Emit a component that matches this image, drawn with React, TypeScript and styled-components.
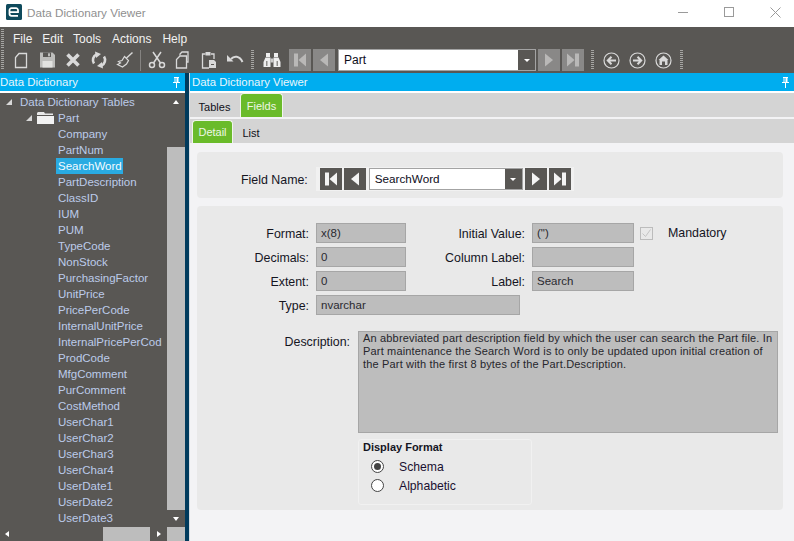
import React from 'react';
import styled, { createGlobalStyle } from 'styled-components';

const Global = createGlobalStyle`
  html, body { margin: 0; padding: 0; background: #fff; overflow: hidden; }
  body { font-family: 'Liberation Sans', Arial, sans-serif; font-size: 12px; }
  * { box-sizing: border-box; }
`;

const Window = styled.div`
  width: 794px;
  height: 541px;
  display: flex;
  flex-direction: column;
  overflow: hidden;
`;

const TitleBar = styled.div`
  height: 27px;
  flex: none;
  display: flex;
  align-items: center;
  padding: 0 0 3px 6px;
  background: #fff;
  color: #8f8f8f;
`;
const TitleText = styled.span`
  margin-left: 5px;
  font-size: 11.7px;
`;
const WindowButtons = styled.div`
  margin-left: auto;
  margin-right: -4px;
  display: flex;
  align-items: center;
`;
const WindowButton = styled.div`
  width: 46px;
  height: 24px;
  display: flex;
  align-items: center;
  justify-content: center;
`;

const Chrome = styled.div`
  flex: none;
  height: 46px;
  background: #595754;
  display: flex;
  flex-direction: column;
`;
const MenuBar = styled.div`
  height: 22px;
  display: flex;
  align-items: center;
  padding: 1px 0 0 1px;
`;
const Grip = styled.div`
  width: 3px;
  height: ${p => p.$h || 19}px;
  flex: none;
  margin-left: ${p => p.$ml || 0}px;
  background: repeating-linear-gradient(to bottom, #a5a5a3 0 1px, #595754 1px 2px);
`;
const MenuItem = styled.span`
  margin-left: ${p => p.$ml}px;
  color: #f2f2f2;
  font-size: 12px;
`;
const ToolBar = styled.div`
  height: 24px;
  display: flex;
  align-items: center;
  padding: 0 0 2px 1px;
`;
const ToolIcon = styled.div`
  width: 26px;
  height: 22px;
  flex: none;
  margin-left: ${p => p.$ml || 0}px;
  display: flex;
  align-items: center;
  justify-content: center;
`;
const Sep = styled.div`
  width: 1px;
  height: 21px;
  background: #858381;
  flex: none;
  margin-left: ${p => p.$ml || 0}px;
`;
const NavBtn = styled.div`
  width: 22px;
  height: 22px;
  flex: none;
  margin-left: ${p => p.$ml || 0}px;
  background: ${p => (p.$dark ? '#595754' : '#898887')};
  display: flex;
  align-items: center;
  justify-content: center;
`;
const Combo = styled.div`
  width: ${p => p.$w}px;
  height: 22px;
  flex: none;
  margin-left: ${p => p.$ml || 0}px;
  display: flex;
  background: #fff;
  border: 1px solid #a3a3a3;
  align-items: center;
  padding-left: 5px;
  color: #0d0d1a;
  font-size: ${p => p.$fs || 12}px;
`;
const ComboText = styled.span`
  position: relative;
  top: ${p => p.$top || 0}px;
`;
const ComboArrow = styled.div`
  margin-left: auto;
  align-self: stretch;
  width: 17px;
  background: #595754;
  display: flex;
  align-items: center;
  justify-content: center;
  &::after {
    content: '';
    border-left: 3px solid transparent;
    border-right: 3px solid transparent;
    border-top: 3px solid #fff;
  }
`;

const Body = styled.div`
  flex: 1;
  display: flex;
  min-height: 0;
`;
const LeftPanel = styled.div`
  width: 185px;
  flex: none;
  display: flex;
  flex-direction: column;
  background: #595754;
`;
const Divider = styled.div`
  width: 5px;
  flex: none;
  background: linear-gradient(to right, #003a5c 0 4px, #d8dde2 4px);
`;
const RightPanel = styled.div`
  flex: 1;
  display: flex;
  flex-direction: column;
  background: #f3f3f5;
  min-width: 0;
`;
const DockHeader = styled.div`
  height: 18px;
  flex: none;
  background: #00adef;
  color: #eaf6fc;
  font-size: 11.4px;
  display: flex;
  align-items: center;
  justify-content: space-between;
  padding: 0 1px 0 ${p => p.$pl || 0}px;
`;
const DockGap = styled.div`
  height: 2px;
  flex: none;
  background: #fff;
`;
const PinWrap = styled.div`
  width: 16px;
  display: flex;
  justify-content: center;
`;

const TreeArea = styled.div`
  flex: 1;
  display: flex;
  min-height: 0;
`;
const Tree = styled.div`
  flex: 1;
  padding-top: 1px;
  overflow: hidden;
  min-width: 0;
`;
const Row = styled.div`
  height: 16px;
  display: flex;
  align-items: center;
  padding-left: ${p => p.$indent}px;
  color: #bccbea;
  font-size: 11.5px;
  white-space: nowrap;
`;
const RowLabel = styled.span`
  background: ${p => (p.$selected ? '#29abe2' : 'transparent')};
  color: ${p => (p.$selected ? '#f4fbff' : 'inherit')};
  padding: 0 1px 0 2px;
  height: 16px;
  line-height: 17px;
`;
const Expander = styled.span`
  width: 0;
  height: 0;
  border-bottom: 6px solid #d8d8d8;
  border-left: 6px solid transparent;
  margin-right: ${p => p.$mr}px;
  flex: none;
`;
const VScroll = styled.div`
  width: 18px;
  flex: none;
  display: flex;
  flex-direction: column;
  align-items: center;
`;
const ScrollGap = styled.div`
  height: 54px;
  padding-top: 7px;
  width: 100%;
  display: flex;
  justify-content: center;
  flex: none;
`;
const Thumb = styled.div`
  flex: 1;
  width: 100%;
  background: #bdbdbd;
`;
const ScrollFoot = styled.div`
  height: 17px;
  width: 100%;
  flex: none;
  display: flex;
  justify-content: center;
  align-items: center;
`;
const UpArrow = styled.span`
  width: 0;
  height: 0;
  border-left: 3.5px solid transparent;
  border-right: 3.5px solid transparent;
  border-bottom: 4px solid #fff;
`;
const DownArrow = styled.span`
  width: 0;
  height: 0;
  border-left: 3.5px solid transparent;
  border-right: 3.5px solid transparent;
  border-top: 4px solid #fff;
`;
const HScroll = styled.div`
  height: 14px;
  flex: none;
  display: flex;
  align-items: center;
`;
const LeftArrow = styled.span`
  width: 0;
  height: 0;
  margin-left: 5px;
  border-top: 3.5px solid transparent;
  border-bottom: 3.5px solid transparent;
  border-right: 4px solid #fff;
`;
const RightArrow = styled.span`
  width: 0;
  height: 0;
  margin-left: 7px;
  border-top: 3.5px solid transparent;
  border-bottom: 3.5px solid transparent;
  border-left: 4px solid #fff;
`;
const HThumb = styled.div`
  width: 47px;
  height: 14px;
  margin-left: 94px;
  background: #bdbdbd;
`;
const Corner = styled.div`
  width: 18px;
  height: 14px;
  margin-left: auto;
  background: #bdbdbd;
`;

const TabStrip = styled.div`
  height: ${p => p.$h}px;
  flex: none;
  background: #d4d4d4;
  display: flex;
  align-items: flex-end;
  padding-left: ${p => p.$pl}px;
  border-bottom: ${p => (p.$line ? '2px solid #f3f3f5' : '0')};
`;
const Tab = styled.div`
  height: ${p => p.$h}px;
  width: ${p => p.$w}px;
  flex: none;
  margin-left: ${p => p.$ml || 0}px;
  display: flex;
  align-items: center;
  justify-content: center;
  font-size: 11px;
  ${p => (p.$active
    ? `background: #6abb2a; color: #eef7e6; border: 1px solid #f1f5ec; border-bottom: 0; border-radius: 4px 4px 0 0;`
    : `color: #101018;`)}
`;

const Content = styled.div`
  flex: 1;
  padding: 9px 11px 0 7px;
  display: flex;
  flex-direction: column;
  gap: 8px;
  min-height: 0;
`;
const Card = styled.div`
  background: #e9e9e9;
  border-radius: 4px;
`;
const NameCard = styled(Card)`
  height: 46px;
  display: flex;
  align-items: center;
  padding: 8px 0 0 44px;
`;
const FieldLabel = styled.span`
  font-size: 12.4px;
  padding-top: 1px;
  color: #15151f;
`;
const NavGroup = styled.div`
  display: flex;
  align-items: center;
  height: 24px;
  margin-left: 8px;
  padding: 0 3px 0 4px;
  background: #f1f1f1;
`;
const DetailCard = styled(Card)`
  height: 304px;
  padding: 17px 0 0 0;
  display: flex;
  flex-direction: column;
`;
const FormGrid = styled.div`
  display: grid;
  grid-template-columns: 112px 90px 112px 102px auto;
  grid-auto-rows: 20px;
  row-gap: 4px;
  column-gap: 7px;
  align-items: center;
`;
const Label = styled.div`
  text-align: right;
  font-size: 12.4px;
  padding-top: 1px;
  color: #15151f;
  white-space: nowrap;
`;
const Field = styled.div`
  height: 20px;
  background: #bdbdbd;
  border: 1px solid #a6a6a6;
  padding-left: 4px;
  font-size: 11.5px;
  line-height: 18px;
  color: #2a2a30;
  grid-column: ${p => (p.$span ? `span ${p.$span}` : 'auto')};
`;
const TypeField = styled(Field)`
  width: 204px;
`;
const MandatoryCell = styled.div`
  display: flex;
  align-items: center;
  font-size: 12.4px;
  color: #15151f;
  margin-left: -1px;
`;
const Check = styled.div`
  width: 13px;
  height: 13px;
  border: 1px solid #bcbcbc;
  margin-right: 15px;
  display: flex;
  align-items: center;
  justify-content: center;
`;
const DescRow = styled.div`
  display: flex;
  margin-top: 16px;
`;
const DescLabel = styled(Label)`
  width: 153px;
  padding-top: 4px;
`;
const DescBox = styled.div`
  width: 420px;
  height: 102px;
  margin-left: 8px;
  background: #bdbdbd;
  border: 1px solid #a6a6a6;
  padding: 0 3px 0 4px;
  font-size: 11px;
  letter-spacing: 0.17px;
  line-height: 13px;
  color: #26262c;
`;
const Group = styled.div`
  width: 174px;
  height: 66px;
  margin: 6px 0 0 161px;
  border: 1px solid #f1f1f1;
  border-radius: 3px;
  padding: 0 0 0 4px;
`;
const GroupTitle = styled.div`
  font-size: 11px;
  font-weight: bold;
  color: #15151f;
  height: 14px;
  line-height: 14px;
  margin-bottom: 3px;
`;
const RadioRow = styled.div`
  display: flex;
  align-items: center;
  height: 19px;
  padding-left: 8px;
  font-size: 12.2px;
  color: #1a1030;
`;
const Radio = styled.span`
  width: 13px;
  height: 13px;
  border-radius: 50%;
  border: 1px solid #444;
  background: #fff;
  margin-right: 15px;
  display: flex;
  align-items: center;
  justify-content: center;
  flex: none;
  &::after {
    content: '';
    width: 7px;
    height: 7px;
    border-radius: 50%;
    background: ${p => (p.$on ? '#444' : 'transparent')};
  }
`;

const FirstIcon = ({ c }: { c: string }) => (
  <svg width="16" height="16" viewBox="0 0 16 16"><rect x="2" y="1.500" width="4" height="13" fill={c} /><path d="M14 1.500v13L6.500 8z" fill={c} /></svg>
);
const PrevIcon = ({ c }: { c: string }) => (
  <svg width="16" height="16" viewBox="0 0 16 16"><path d="M12 1.500v13L4 8z" fill={c} /></svg>
);
const NextIcon = ({ c }: { c: string }) => (
  <svg width="16" height="16" viewBox="0 0 16 16"><path d="M4 1.500v13L12 8z" fill={c} /></svg>
);
const LastIcon = ({ c }: { c: string }) => (
  <svg width="16" height="16" viewBox="0 0 16 16"><path d="M2 1.500v13L9.500 8z" fill={c} /><rect x="10" y="1.500" width="4" height="13" fill={c} /></svg>
);
const PinIcon = () => (
  <svg width="9" height="11" viewBox="0 0 9 11"><path d="M2 0h5v1H6.500v4H8v1H5v5H4V6H1V5h1.500V1H2zM3.500 1v4h1V1z" fill="#fff" /></svg>
);
const LOGO = '#0f4a5c';
const Logo = () => (
  <svg width="16" height="16" viewBox="0 0 16 16">
    <rect width="16" height="16" rx="1.500" fill={LOGO} />
    <path d="M3.500 8.200h8.500V6.200a2 2 0 0 0-2-2H5.500a2 2 0 0 0-2 2v3.600a2 2 0 0 0 2 2H12" fill="none" stroke="#fff" strokeWidth="1.800" />
  </svg>
);
const stroke = '#d9d9d9';
const icons: Record<string, React.ReactNode> = {
  file: <svg width="14" height="17" viewBox="0 0 14 17"><path d="M5 1.500h7.500v14h-11V5.500z" fill="none" stroke={stroke} strokeWidth="1.300" /></svg>,
  save: <svg width="17" height="16" viewBox="0 0 17 16"><path d="M1 .5h12.500L16 3v12.500H1z" fill="#bdbdbb" /><rect x="4" y=".5" width="8" height="4.500" fill="#595754" /><rect x="9" y="1.300" width="2" height="3" fill="#bdbdbb" /><rect x="3.500" y="9" width="10" height="6.500" fill="#e2e2e0" /></svg>,
  close: <svg width="16" height="16" viewBox="0 0 16 16"><path d="M2.500 2.500l11 11M13.500 2.500l-11 11" stroke={stroke} strokeWidth="3.600" /></svg>,
  refresh: <svg width="18" height="18" viewBox="0 0 18 18"><path d="M4 12.500A6.200 6.200 0 0 1 6.500 3.400" fill="none" stroke={stroke} strokeWidth="2.600" /><path d="M5 .5l6 2.500-5 4z" fill={stroke} /><path d="M14 5.500a6.200 6.200 0 0 1-2.500 9.100" fill="none" stroke={stroke} strokeWidth="2.600" /><path d="M13 17.500L7 15l5-4z" fill={stroke} /></svg>,
  broom: <svg width="18" height="18" viewBox="0 0 18 18"><path d="M16.500 1.500L10.500 7" stroke={stroke} strokeWidth="1.400" /><path d="M8.500 5.500l4 4-2 3.500-4 3-5-2.500 3-1.500-2-1.500 3.500-1z" fill="none" stroke={stroke} strokeWidth="1.200" /></svg>,
  scissors: <svg width="18" height="18" viewBox="0 0 18 18"><circle cx="4" cy="14" r="2.500" fill="none" stroke={stroke} strokeWidth="1.500" /><circle cx="14" cy="14" r="2.500" fill="none" stroke={stroke} strokeWidth="1.500" /><path d="M5.500 12L13 1M12.500 12L5 1" stroke={stroke} strokeWidth="1.500" /></svg>,
  copy: <svg width="16" height="18" viewBox="0 0 16 18"><path d="M5 4.500V3l2-2h6v10h-2" fill="none" stroke={stroke} strokeWidth="1.300" /><path d="M5 5h6.500v12H1.500V8.500z" fill="#595754" stroke={stroke} strokeWidth="1.300" /></svg>,
  paste: <svg width="16" height="18" viewBox="0 0 16 18"><path d="M4.500 3H1.500v14H8M10 3h3v5" fill="none" stroke={stroke} strokeWidth="1.300" /><rect x="4.500" y="1" width="5" height="3.500" fill={stroke} /><path d="M8 9h5l2 2v6H8z" fill={stroke} /><rect x="10" y="13" width="3" height="1" fill="#595754" /></svg>,
  undo: <svg width="18" height="14" viewBox="0 0 18 14"><path d="M5 6c3-3.500 8.500-3.500 11.500 3" fill="none" stroke={stroke} strokeWidth="2" /><path d="M1 2v6.500h6.500z" fill={stroke} /></svg>,
  binoculars: <svg width="18" height="16" viewBox="0 0 18 16"><rect x="3" y="1" width="4" height="4" fill="#eee" /><rect x="11" y="1" width="4" height="4" fill="#eee" /><path d="M2.500 5.500h5v9.500H.5V10z" fill="#eee" /><path d="M10.500 5.500h5l2 4.500v5h-7z" fill="#eee" /><rect x="7.500" y="6.500" width="3" height="4" fill="#ccc" /><rect x="3" y="9" width="1.500" height="5" fill="#8e8d8b" /><rect x="13.500" y="9" width="1.500" height="5" fill="#8e8d8b" /></svg>,
  back: <svg width="17" height="17" viewBox="0 0 17 17"><circle cx="8.500" cy="8.500" r="7.500" fill="none" stroke={stroke} strokeWidth="1.200" /><path d="M13 8.500H5M8.500 4.800L4.800 8.500l3.700 3.700" fill="none" stroke={stroke} strokeWidth="2" /></svg>,
  forward: <svg width="17" height="17" viewBox="0 0 17 17"><circle cx="8.500" cy="8.500" r="7.500" fill="none" stroke={stroke} strokeWidth="1.200" /><path d="M4 8.500h8M8.500 4.800l3.700 3.700-3.700 3.700" fill="none" stroke={stroke} strokeWidth="2" /></svg>,
  home: <svg width="17" height="17" viewBox="0 0 17 17"><circle cx="8.500" cy="8.500" r="7.500" fill="none" stroke={stroke} strokeWidth="1.200" /><path d="M8.500 3.500l5 4.500h-1v5H10V9.500H7V13H4.500V8h-1z" fill={stroke} /></svg>,
};

const treeFields = [
  'Company', 'PartNum', 'SearchWord', 'PartDescription', 'ClassID', 'IUM', 'PUM', 'TypeCode', 'NonStock',
  'PurchasingFactor', 'UnitPrice', 'PricePerCode', 'InternalUnitPrice', 'InternalPricePerCod', 'ProdCode',
  'MfgComment', 'PurComment', 'CostMethod', 'UserChar1', 'UserChar2', 'UserChar3', 'UserChar4',
  'UserDate1', 'UserDate2', 'UserDate3',
];

const Folder = styled.svg`
  margin-right: 4px;
  flex: none;
`;
const FolderIcon = () => (
  <Folder width="17" height="12" viewBox="0 0 17 12">
    <path d="M1 0h6l1 1.500h8V3H0V1z" fill="#e9e9e9" />
    <rect x="0" y="4" width="17" height="8" fill="#f2f2f2" />
  </Folder>
);

export default function App() {
  return (
    <Window>
      <Global />
      <TitleBar>
        <Logo />
        <TitleText>Data Dictionary Viewer</TitleText>
        <WindowButtons>
          <WindowButton>
            <svg width="10" height="1"><rect width="10" height="1" fill="#9a9a9a" /></svg>
          </WindowButton>
          <WindowButton>
            <svg width="10" height="10"><rect x=".5" y=".5" width="9" height="9" fill="none" stroke="#9a9a9a" /></svg>
          </WindowButton>
          <WindowButton>
            <svg width="11" height="11"><path d="M.5.5l10 10M10.500.5l-10 10" stroke="#9a9a9a" /></svg>
          </WindowButton>
        </WindowButtons>
      </TitleBar>
      <Chrome>
        <MenuBar>
          <Grip />
          <MenuItem $ml={9}>File</MenuItem>
          <MenuItem $ml={10}>Edit</MenuItem>
          <MenuItem $ml={10}>Tools</MenuItem>
          <MenuItem $ml={11}>Actions</MenuItem>
          <MenuItem $ml={11}>Help</MenuItem>
        </MenuBar>
        <ToolBar>
          <Grip $h={20} />
          <ToolIcon $ml={4}>{icons.file}</ToolIcon>
          <ToolIcon>{icons.save}</ToolIcon>
          <ToolIcon>{icons.close}</ToolIcon>
          <ToolIcon>{icons.refresh}</ToolIcon>
          <ToolIcon>{icons.broom}</ToolIcon>
          <Sep $ml={2} />
          <ToolIcon $ml={3}>{icons.scissors}</ToolIcon>
          <ToolIcon>{icons.copy}</ToolIcon>
          <ToolIcon>{icons.paste}</ToolIcon>
          <ToolIcon>{icons.undo}</ToolIcon>
          <Grip $h={20} $ml={3} />
          <ToolIcon $ml={5}>{icons.binoculars}</ToolIcon>
          <NavBtn $ml={4}><FirstIcon c="#b9b8b7" /></NavBtn>
          <NavBtn $ml={2}><PrevIcon c="#b9b8b7" /></NavBtn>
          <Combo $w={198} $ml={3} $fs={12}>
            <ComboText>Part</ComboText>
            <ComboArrow />
          </Combo>
          <NavBtn $ml={2}><NextIcon c="#b9b8b7" /></NavBtn>
          <NavBtn $ml={2}><LastIcon c="#b9b8b7" /></NavBtn>
          <Grip $h={20} $ml={7} />
          <ToolIcon $ml={4}>{icons.back}</ToolIcon>
          <ToolIcon>{icons.forward}</ToolIcon>
          <ToolIcon>{icons.home}</ToolIcon>
          <Grip $h={20} $ml={4} />
        </ToolBar>
      </Chrome>
      <Body>
        <LeftPanel>
          <DockHeader>
            Data Dictionary
            <PinWrap><PinIcon /></PinWrap>
          </DockHeader>
          <DockGap />
          <TreeArea>
            <Tree>
              <Row $indent={6}>
                <Expander $mr={8} />
                Data Dictionary Tables
              </Row>
              <Row $indent={26}>
                <Expander $mr={5} />
                <FolderIcon />
                Part
              </Row>
              {treeFields.map(f => (
                <Row key={f} $indent={56}>
                  <RowLabel $selected={f === 'SearchWord'}>{f}</RowLabel>
                </Row>
              ))}
            </Tree>
            <VScroll>
              <ScrollGap><UpArrow /></ScrollGap>
              <Thumb />
              <ScrollFoot><DownArrow /></ScrollFoot>
            </VScroll>
          </TreeArea>
          <HScroll>
            <LeftArrow />
            <HThumb />
            <RightArrow />
            <Corner />
          </HScroll>
        </LeftPanel>
        <Divider />
        <RightPanel>
          <DockHeader $pl={2}>
            Data Dictionary Viewer
            <PinWrap><PinIcon /></PinWrap>
          </DockHeader>
          <DockGap />
          <TabStrip $h={26} $pl={8} $line>
            <Tab $h={20} $w={33}>Tables</Tab>
            <Tab $h={24} $w={43} $ml={9} $active>Fields</Tab>
          </TabStrip>
          <TabStrip $h={24} $pl={2}>
            <Tab $h={23} $w={41} $active>Detail</Tab>
            <Tab $h={20} $w={20} $ml={8}>List</Tab>
          </TabStrip>
          <Content>
            <NameCard>
              <FieldLabel>Field Name:</FieldLabel>
              <NavGroup>
                <NavBtn $dark><FirstIcon c="#f4f4f4" /></NavBtn>
                <NavBtn $dark $ml={2}><PrevIcon c="#f4f4f4" /></NavBtn>
                <Combo $w={154} $ml={3} $fs={11.7}>
                  <ComboText $top={-1}>SearchWord</ComboText>
                  <ComboArrow />
                </Combo>
                <NavBtn $dark $ml={2}><NextIcon c="#f4f4f4" /></NavBtn>
                <NavBtn $dark $ml={2}><LastIcon c="#f4f4f4" /></NavBtn>
              </NavGroup>
            </NameCard>
            <DetailCard>
              <FormGrid>
                <Label>Format:</Label>
                <Field>x(8)</Field>
                <Label>Initial Value:</Label>
                <Field>(")</Field>
                <MandatoryCell>
                  <Check>
                    <svg width="11" height="11" viewBox="0 0 11 11"><path d="M1.500 5.500l3 3 5-7" fill="none" stroke="#c4c4c4" /></svg>
                  </Check>
                  Mandatory
                </MandatoryCell>
                <Label>Decimals:</Label>
                <Field>0</Field>
                <Label>Column Label:</Label>
                <Field />
                <span />
                <Label>Extent:</Label>
                <Field>0</Field>
                <Label>Label:</Label>
                <Field>Search</Field>
                <span />
                <Label>Type:</Label>
                <TypeField $span={3}>nvarchar</TypeField>
              </FormGrid>
              <DescRow>
                <DescLabel>Description:</DescLabel>
                <DescBox>
                  An abbreviated part description field by which the user can search the Part file. In Part maintenance the Search Word is to only be updated upon initial creation of the Part with the first 8 bytes of the Part.Description.
                </DescBox>
              </DescRow>
              <Group>
                <GroupTitle>Display Format</GroupTitle>
                <RadioRow><Radio $on />Schema</RadioRow>
                <RadioRow><Radio />Alphabetic</RadioRow>
              </Group>
            </DetailCard>
          </Content>
        </RightPanel>
      </Body>
    </Window>
  );
}
